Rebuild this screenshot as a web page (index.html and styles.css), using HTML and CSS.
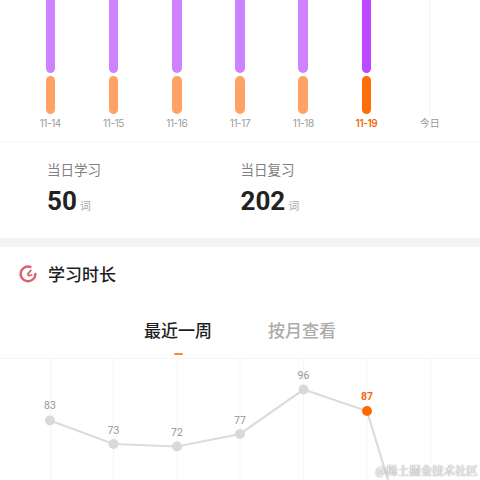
FILE: index.html
```html
<!DOCTYPE html>
<html lang="zh">
<head>
<meta charset="utf-8">
<title>学习统计</title>
<link rel="stylesheet" href="styles.css">
</head>
<body>
<main class="page">
  <section class="bars">
    <div class="bar-col"><div class="bar-track"><i class="bar-purple"></i><i class="bar-orange"></i></div><span class="bar-label">11-14</span></div>
    <div class="bar-col"><div class="bar-track"><i class="bar-purple"></i><i class="bar-orange"></i></div><span class="bar-label">11-15</span></div>
    <div class="bar-col"><div class="bar-track"><i class="bar-purple"></i><i class="bar-orange"></i></div><span class="bar-label">11-16</span></div>
    <div class="bar-col"><div class="bar-track"><i class="bar-purple"></i><i class="bar-orange"></i></div><span class="bar-label">11-17</span></div>
    <div class="bar-col"><div class="bar-track"><i class="bar-purple"></i><i class="bar-orange"></i></div><span class="bar-label">11-18</span></div>
    <div class="bar-col active"><div class="bar-track"><i class="bar-purple"></i><i class="bar-orange"></i></div><span class="bar-label">11-19</span></div>
    <div class="bar-col today"><div class="bar-track"></div><span class="bar-label">今日</span></div>
  </section>

  <section class="stats">
    <div class="stat">
      <div class="stat-label">当日学习</div>
      <div class="stat-value"><b>50</b><span>词</span></div>
    </div>
    <div class="stat">
      <div class="stat-label">当日复习</div>
      <div class="stat-value"><b>202</b><span>词</span></div>
    </div>
  </section>

  <div class="band"></div>

  <header class="title-row">
    <svg class="title-icon" viewBox="0 0 20 20" aria-hidden="true">
      <path d="M12.4 2.9A7.4 7.4 0 1 0 17.4 10" fill="none" stroke="#d9616f" stroke-width="2.4" stroke-linecap="round"/>
      <path d="M13 6.4L10 9.6Q9.4 11.2 11 11.6L13.8 11" fill="none" stroke="#d9616f" stroke-width="1.7" stroke-linecap="round" stroke-linejoin="round"/>
    </svg>
    <h2>学习时长</h2>
  </header>

  <nav class="tabs">
    <span class="tab on">最近一周</span>
    <span class="tab">按月查看</span>
  </nav>

  <svg class="chart" viewBox="0 1 480 121" aria-label="学习时长折线图">
    <g class="grid">
      <line x1="50.5" y1="0" x2="50.5" y2="122"/>
      <line x1="113.5" y1="0" x2="113.5" y2="122"/>
      <line x1="177" y1="0" x2="177" y2="122"/>
      <line x1="240" y1="0" x2="240" y2="122"/>
      <line x1="303.5" y1="0" x2="303.5" y2="122"/>
      <line x1="367" y1="0" x2="367" y2="122"/>
      <line x1="430.5" y1="0" x2="430.5" y2="122"/>
    </g>
    <polyline class="trend" points="50,62.5 113.5,86 177,88.5 240,76 303.5,31.5 367,53 430,260"/>
    <g class="dots">
      <circle cx="50" cy="62.5" r="5"/>
      <circle cx="113.5" cy="86" r="5"/>
      <circle cx="177" cy="88.5" r="5"/>
      <circle cx="240" cy="76" r="5"/>
      <circle cx="303.5" cy="31.5" r="5"/>
      <circle class="dot-on" cx="367" cy="53" r="5"/>
    </g>
    <g class="values">
      <text x="50" y="51">83</text>
      <text x="113.5" y="75.5">73</text>
      <text x="177" y="77.5">72</text>
      <text x="240" y="65.5">77</text>
      <text x="303.5" y="20.5">96</text>
      <text class="value-on" x="367" y="41.5">87</text>
    </g>
  </svg>

  <div class="watermark">@稀土掘金技术社区</div>
</main>
</body>
</html>
```

FILE: styles.css
```css
* { box-sizing: border-box; }
html, body { margin: 0; padding: 0; background: #fff; }
body { width: 480px; height: 480px; overflow: hidden; font-family: "Noto Sans CJK SC", "Noto Sans", sans-serif; }
.page { position: relative; width: 480px; height: 480px; overflow: hidden; display: flex; flex-direction: column; }

.bars { display: flex; height: 142px; padding: 0 18.7px; border-bottom: 1px solid #f7f7f7; flex: none; }
.bar-col { width: 63.4px; display: flex; flex-direction: column; align-items: center; }
.bar-track { height: 114.5px; width: 9.5px; display: flex; flex-direction: column; gap: 2.5px; flex: none; }
.bar-track i { display: block; width: 100%; border-radius: 5px; }
.bar-track .bar-purple { height: 73px; background: #cd82ff; border-radius: 0 0 5px 5px; }
.bar-orange { height: 38.5px; background: #ffa263; }
.active .bar-track .bar-purple { background: #bd49ff; }
.active .bar-orange { background: #ff6c0a; }
.today .bar-track { width: 1px; background: #f5f5f5; }
.bar-label { margin-top: 0.5px; font-family: "Inter", "Noto Sans CJK SC", sans-serif; font-size: 10px; letter-spacing: -0.4px; line-height: 16px; color: #9a9a9a; white-space: nowrap; }
.active .bar-label { color: #ee6a10; font-weight: 600; }
.today .bar-label { letter-spacing: 0; }

.stats { display: flex; padding: 17px 0 0 47px; height: 96px; flex: none; }
.stat { width: 193.5px; }
.stat-label { font-size: 13.5px; line-height: 20px; color: #808080; }
.stat-value { display: flex; align-items: baseline; margin-top: 5px; color: #222; }
.stat-value b { font-family: "Roboto", sans-serif; font-size: 26px; line-height: 34px; font-weight: 700; }
.stat-value span { margin-left: 3px; font-size: 11px; line-height: 14px; color: #a6a6a6; }

.band { height: 9px; background: #f4f4f4; flex: none; }

.title-row { display: flex; align-items: center; height: 56px; padding: 0 0 2px 18px; flex: none; }
.title-icon { width: 20px; height: 20px; flex: none; }
.title-row h2 { margin: 0 0 0 10px; font-size: 17px; font-weight: 500; line-height: 24px; color: #1e1e1e; }

.tabs { display: flex; justify-content: center; gap: 56px; height: 56px; padding: 15px 0 0; flex: none; border-bottom: 1px solid #f5f5f5; }
.tab { font-size: 17px; line-height: 24px; font-weight: 500; color: #acacac; }
.tab.on { color: #1e1e1e; position: relative; }
.tab.on::after { content: ""; position: absolute; left: 30px; top: 34.5px; width: 9px; height: 2px; border-radius: 1px; background: #f08a3c; }

.chart { display: block; width: 480px; height: 121px; flex: none; }
.grid line { stroke: #f6f6f6; stroke-width: 1; }
.trend { fill: none; stroke: #dcdcdc; stroke-width: 2.2; }
.dots circle { fill: #d9d9d9; }
.dots .dot-on { fill: #ff6a00; }
.values text { font-family: "Roboto", sans-serif; font-size: 10.5px; fill: #969696; text-anchor: middle; }
.values .value-on { fill: #ee6a10; font-weight: 700; }

.watermark { position: absolute; right: 2px; bottom: 2px; font-family: "Noto Serif CJK SC", "Noto Sans CJK SC", serif; font-size: 11.5px; line-height: 15px; color: #fff; text-shadow: 0 0 1.5px #777, 0 0 1px #999; white-space: nowrap; }
```
